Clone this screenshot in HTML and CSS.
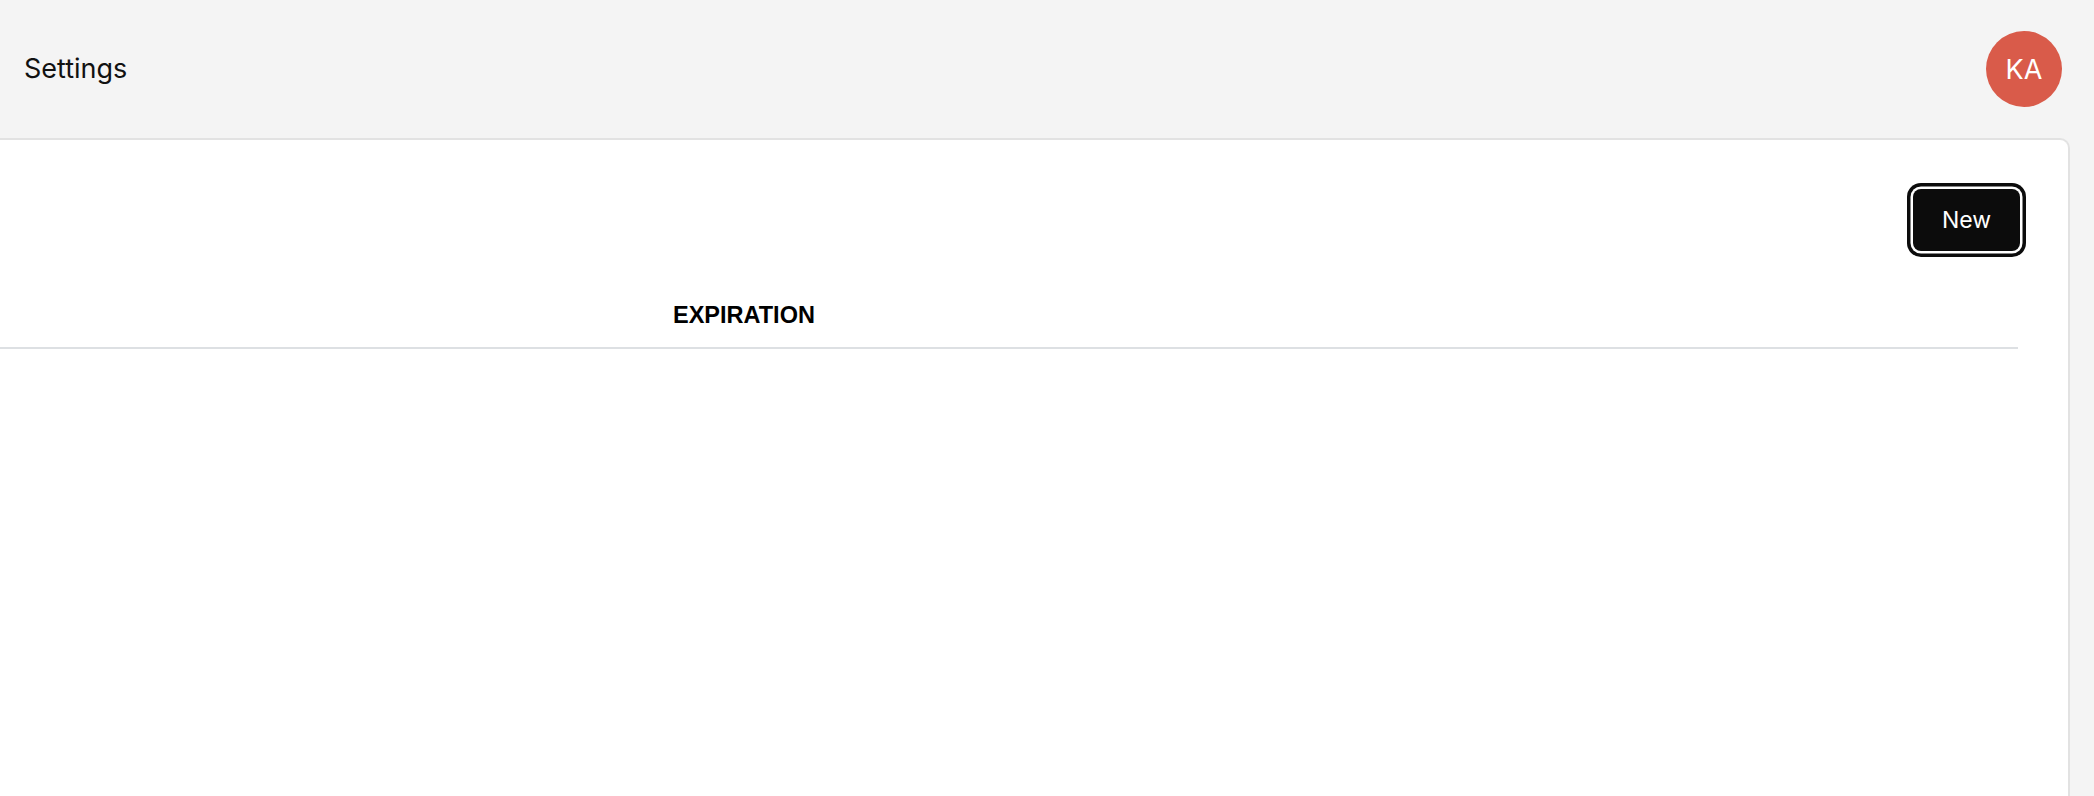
FILE: index.html
```html
<!DOCTYPE html>
<html lang="en">
<head>
<meta charset="utf-8">
<title>Settings</title>
<link rel="stylesheet" href="styles.css">
</head>
<body>
<header class="topbar">
  <h1 class="title">Settings</h1>
  <div class="avatar">KA</div>
</header>
<main class="panel">
  <div class="toolbar">
    <button class="btn-new" type="button">New</button>
  </div>
  <table class="table">
    <thead>
      <tr>
        <th class="col-name"></th>
        <th class="col-exp">EXPIRATION</th>
      </tr>
    </thead>
    <tbody></tbody>
  </table>
</main>
</body>
</html>
```
FILE: styles.css
```css
html, body {
  margin: 0;
  padding: 0;
  height: 100%;
  overflow: hidden;
}
body {
  background: #f4f4f4;
  font-family: Inter, "Noto Sans", "Liberation Sans", sans-serif;
  color: #111;
  display: flex;
  flex-direction: column;
}
.topbar {
  flex: none;
  height: 138px;
  box-sizing: border-box;
  display: flex;
  align-items: center;
  justify-content: space-between;
  padding: 0 32px 0 24px;
}
.title {
  margin: 0;
  font-size: 27px;
  font-weight: 400;
  line-height: 32px;
  color: #111;
}
.avatar {
  width: 76px;
  height: 76px;
  border-radius: 50%;
  background: #d95b4a;
  color: #fff;
  display: flex;
  align-items: center;
  justify-content: center;
  font-size: 27px;
  font-weight: 400;
}
.panel {
  flex: 1;
  min-height: 0;
  margin-left: -12px;
  margin-right: 24px;
  background: #fff;
  border: 2px solid #e2e2e2;
  border-bottom: none;
  border-radius: 0 10px 0 0;
  padding: 42px 50px 0 0;
}
.toolbar {
  display: flex;
  justify-content: flex-end;
  margin-right: -2px;
}
.btn-new {
  width: 107px;
  height: 62px;
  margin: 7px 0 7px 0;
  background: #0c0c0c;
  color: #fff;
  border: none;
  border-radius: 8px;
  box-shadow: 0 0 0 2.5px #fff, 0 0 0 6px #0c0c0c;
  font-family: Inter, "Noto Sans", "Liberation Sans", sans-serif;
  font-size: 23px;
  font-weight: 400;
  cursor: pointer;
}
.table {
  width: 100%;
  border-collapse: collapse;
  margin-top: 25px;
}
.table th {
  text-align: left;
  padding: 18px 0 18px 0;
  line-height: 28px;
  font-family: "Liberation Sans", Arial, sans-serif;
  font-size: 23.5px;
  font-weight: 700;
  color: #000;
  border-bottom: 2px solid #dde0e3;
}
.col-name {
  width: 683px;
}
```
